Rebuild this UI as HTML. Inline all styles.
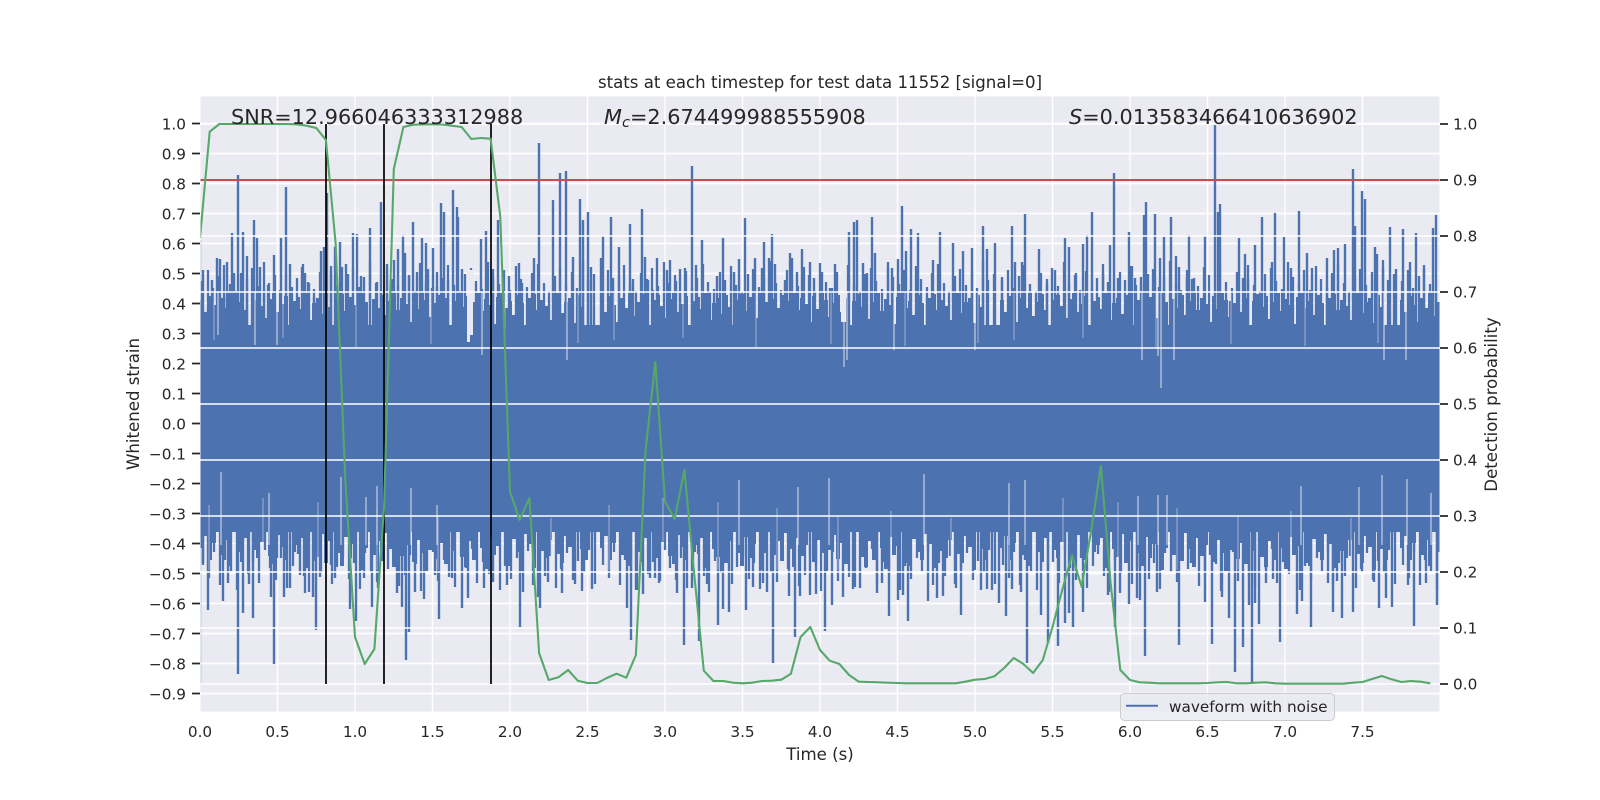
<!DOCTYPE html>
<html><head><meta charset="utf-8"><style>
html,body{margin:0;padding:0;background:#fff;width:1600px;height:800px;overflow:hidden}
svg{display:block}
text{font-family:"DejaVu Sans","Liberation Sans",sans-serif;fill:#262626}
.t{font-size:15.28px}
.l{font-size:16.6px}
.a{font-size:20.8px}
</style></head><body>
<svg width="1600" height="800" viewBox="0 0 1600 800" xmlns="http://www.w3.org/2000/svg">
<defs>
<clipPath id="ax"><rect x="200.5" y="96.5" width="1239" height="615"/></clipPath>
<path id="mt" d="M0 423V300h4V312h4V296h4V305h4V322h4V298h4V308h4V293h4V316h4V302h4V294h4V310h4V328h4V300h4V295h4V306h4V318h4V299h4V293h4V312h4V304h4V296h4V325h4V301h4V297h4V309h4V293h4V320h4V303h4V298h4V314h4V295h4V307h4V331h4V300h4V294h4V311h4V297h4V305h4V318h4V293h4V302h4V326h4V299h4V308h4V295h4V315h4V301h4V293h4V310h4V298h4V304h4V322h4V296h4V309h4V293h4V300h4V317h4V303h4V295h4V312h4V298h4V328h4V301h4V294h4V307h4V296h4V319h4V302h4V293h4V311h4V299h4V305h4V324h4V297h4V293h4V308h4V301h4V315h4V295h4V303h4V329h4V298h4V294h4V310h4V300h4V306h4V320h4V296h4V293h4V313h4V302h4V298h4V323h4V295h4V307h4V300V423Z"/>
<path id="mb" d="M0 423V548h4V536h4V560h4V543h4V528h4V555h4V540h4V566h4V532h4V552h4V562h4V538h4V525h4V550h4V558h4V542h4V530h4V556h4V564h4V535h4V547h4V560h4V527h4V552h4V545h4V538h4V568h4V529h4V549h4V557h4V534h4V563h4V541h4V522h4V553h4V566h4V537h4V558h4V544h4V531h4V570h4V548h4V526h4V555h4V541h4V561h4V533h4V549h4V567h4V538h4V556h4V545h4V529h4V562h4V540h4V553h4V571h4V550h4V535h4V559h4V543h4V564h4V532h4V551h4V524h4V557h4V567h4V541h4V560h4V530h4V548h4V569h4V537h4V555h4V546h4V527h4V563h4V566h4V539h4V552h4V560h4V534h4V544h4V568h4V528h4V551h4V558h4V540h4V523h4V554h4V563h4V536h4V547h4V570h4V530h4V549h4V560h4V538V423Z"/>
<path id="st" d="M2 281V340M8 270V340M13 288V340M19 276V340M24 265V340M30 284V340M36 291V340M41 273V340M47 279V340M52 268V340M58 286V340M64 262V340M69 283V340M75 275V340M80 290V340M86 271V340M92 287V340M97 278V340M103 264V340M108 282V340M114 289V340M120 272V340M125 280V340M131 266V340M136 285V340M142 292V340M148 274V340M153 269V340M159 287V340M164 277V340M170 261V340M176 283V340M181 290V340M187 270V340M192 279V340M198 286V340M204 267V340M209 275V340M215 291V340M220 263V340M226 282V340M232 288V340M237 272V340M243 278V340M248 265V340M254 285V340M260 291V340M265 274V340M271 268V340M276 281V340M282 289V340M288 262V340M293 277V340M299 284V340M304 270V340M310 290V340M316 266V340M321 279V340M327 287V340M332 273V340M338 264V340M344 283V340M349 291V340M355 276V340M360 269V340M366 285V340M372 272V340M377 288V340M383 260V340M388 280V340M394 274V340"/>
<path id="sb" d="M3 565V510M9 578V510M14 552V510M20 585V510M25 560V510M31 571V510M37 590V510M42 556V510M48 574V510M53 562V510M59 583V510M65 550V510M70 568V510M76 580V510M81 558V510M87 588V510M93 566V510M98 554V510M104 576V510M109 592V510M115 561V510M121 573V510M126 551V510M132 584V510M137 567V510M143 557V510M149 579V510M154 563V510M160 589V510M165 553V510M171 572V510M177 582V510M182 559V510M188 569V510M193 548V510M199 586V510M205 575V510M210 555V510M216 564V510M221 591V510M227 570V510M233 552V510M238 581V510M244 560V510M249 577V510M255 587V510M261 556V510M266 568V510M272 549V510M277 583V510M283 562V510M289 574V510M294 554V510M300 590V510M305 566V510M311 579V510M317 558V510M322 571V510M328 551V510M333 585V510M339 563V510M345 576V510M350 556V510M356 588V510M361 569V510M367 553V510M373 580V510M378 561V510M384 572V510M389 550V510M395 584V510"/>
<path id="ct" d="M14 293V340M83 293V338M156 293V348M231 293V344M305 293V346M378 293V343"/>
<path id="cb" d="M9 570V505M63 570V498M118 570V502M177 570V508M238 570V516M291 570V511M351 570V518"/>
</defs>
<rect width="1600" height="800" fill="#fff"/>
<rect x="200.5" y="96.5" width="1239" height="615" fill="#eaeaf2"/>
<!-- left axes grid -->
<path stroke="#fff" stroke-width="1.39" fill="none" clip-path="url(#ax)" d="M200 123.5H1440M200 153.5H1440M200 183.5H1440M200 213.5H1440M200 243.5H1440M200 273.5H1440M200 303.5H1440M200 333.5H1440M200 363.5H1440M200 393.5H1440M200 423.5H1440M200 453.5H1440M200 483.5H1440M200 513.5H1440M200 543.5H1440M200 573.5H1440M200 603.5H1440M200 633.5H1440M200 663.5H1440M200 693.5H1440M277.5 96V712M355 96V712M432.5 96V712M510 96V712M587.5 96V712M665 96V712M742.5 96V712M820 96V712M897.5 96V712M975 96V712M1052.5 96V712M1130 96V712M1207.5 96V712M1285 96V712M1362.5 96V712"/>
<g clip-path="url(#ax)">
<rect x="200" y="240" width="1.5" height="444" fill="#4c72b0" opacity=".25"/>
<rect x="200" y="325" width="1240" height="207" fill="#4c72b0"/>
<g fill="#4c72b0">
<use href="#mt" x="200"/><use href="#mt" x="600"/><use href="#mt" x="1000"/><use href="#mt" x="1400"/>
<use href="#mb" x="200"/><use href="#mb" x="600"/><use href="#mb" x="1000"/><use href="#mb" x="1400"/>
</g>
<g stroke="#4c72b0" stroke-width="2.3" fill="none">
<use href="#st" x="200"/><use href="#st" x="600"/><use href="#st" x="1000"/><use href="#st" x="1400"/>
<use href="#sb" x="200"/><use href="#sb" x="600"/><use href="#sb" x="1000"/><use href="#sb" x="1400"/>
</g>
<rect x="467" y="270" width="3" height="72" fill="#eaeaf2"/>
<rect x="470" y="270" width="3" height="65" fill="#eaeaf2"/>
<rect x="841" y="270" width="5" height="52" fill="#eaeaf2"/>
<!-- upper spikes -->
<path fill="none" stroke="#4c72b0" stroke-width="2.4" d="M203 270V340M208 310V340M212 280V340M217 258V340M220 259V340M224 297V340M227 262V340M232 233V340M234 273V340M238 175V340M243 232V340M247 256V340M254 220V340M257 238V340M260 267V340M264 290V340M268 285V340M274 255V340M281 238V340M286 187V340M290 264V340M302 267V340M305 273V340M309 283V340M314 297V340M321 251V340M324 247V340M327 193V340M331 271V340M335 247V340M340 242V340M342 267V340M346 264V340M353 233V340M357 234V340M361 276V340M370 228V340M377 282V340M381 202V340M387 264V340M394 260V340M398 249V340M403 235V340M405 253V340M409 276V340M413 222V340M417 272V340M422 238V340M426 243V340M428 269V340M433 248V340M437 287V340M441 203V340M444 212V340M448 280V340M453 190V340M457 207V340M458 217V340M462 269V340M481 239V340M486 231V340M493 269V340M498 220V340M503 277V340M509 276V340M519 263V340M522 283V340M534 258V340M539 143V340M553 200V340M560 173V340M566 171V340M573 257V340M580 199V340M583 220V340M588 212V340M591 267V340M601 258V340M603 236V340M611 217V340M613 278V340M619 247V340M630 224V340M633 279V340M642 209V340M645 257V340M648 280V340M653 290V340M657 258V340M667 270V340M670 260V340M676 281V340M680 269V340M685 268V340M692 166V340M696 265V340M702 240V340M710 292V340M717 276V340M723 238V340M734 272V340M739 259V340M745 218V340M755 258V340M762 268V340M764 242V340M769 258V340M772 234V340M775 264V340M785 280V340M790 253V340M792 258V340M797 272V340M802 249V340M810 262V340M814 278V340M822 272V340M830 288V340M835 264V340M849 232V340M854 222V340M857 220V340M863 263V340M867 273V340M872 217V340M875 253V340M888 267V340M892 268V340M898 259V340M902 206V340M906 251V340M911 229V340M918 233V340M927 299V340M933 260V340M940 232V340M953 243V340M963 251V340M972 248V340M983 226V340M987 249V340M995 243V340M1002 277V340M1012 226V340M1015 262V340M1022 262V340M1025 214V340M1039 249V340M1047 283V340M1055 270V340M1065 238V340M1069 247V340M1076 273V340M1083 244V340M1087 235V340M1092 212V340M1103 273V340M1110 245V340M1114 173V340M1118 278V340M1129 232V340M1132 266V340M1135 278V340M1141 277V340M1144 215V340M1146 202V340M1155 214V340M1160 258V340M1164 237V340M1171 217V340M1176 256V340M1179 267V340M1187 277V340M1189 235V340M1194 278V340M1205 236V340M1215 125V340M1218 212V340M1220 204V340M1230 301V340M1239 238V340M1245 254V340M1248 279V340M1255 245V340M1262 217V340M1272 262V340M1275 213V340M1284 237V340M1291 268V340M1299 211V340M1307 253V340M1312 268V340M1327 258V340M1334 250V340M1338 248V340M1345 244V340M1353 169V340M1355 226V340M1362 191V340M1365 199V340M1375 247V340M1377 254V340M1383 268V340M1390 227V340M1396 269V340M1403 229V340M1410 262V340M1416 233V340M1424 268V340M1433 228V340M1436 215V340"/>
<!-- lower spikes -->
<path fill="none" stroke="#4c72b0" stroke-width="2.4" d="M203 563V510M208 610V510M223 601V510M228 583V510M238 674V510M243 613V510M249 584V510M253 618V510M271 597V510M274 664V510M277 558V510M284 597V510M290 588V510M300 575V510M305 593V510M313 597V510M316 630V510M320 577V510M331 565V510M335 578V510M350 609V510M356 621V510M364 578V510M372 607V510M378 588V510M397 593V510M402 607V510M406 660V510M409 632V510M415 592V510M424 599V510M435 575V510M439 619V510M452 578V510M462 608V510M468 598V510M484 588V510M493 582V510M507 585V510M520 627V510M523 592V510M538 597V510M540 608V510M548 582V510M562 593V510M575 584V510M582 591V510M592 589V510M627 608V510M631 640V510M636 590V510M643 594V510M650 578V510M655 578V510M660 581V510M677 593V510M684 645V510M692 588V510M699 641V510M707 584V510M718 625V510M723 609V510M729 612V510M746 610V510M753 587V510M763 583V510M767 592V510M773 663V510M789 596V510M795 637V510M800 596V510M810 595V510M816 594V510M825 631V510M832 605V510M843 597V510M853 589V510M860 588V510M877 593V510M882 583V510M889 616V510M898 600V510M903 595V510M908 621V510M928 601V510M937 598V510M943 596V510M955 584V510M961 615V510M981 590V510M987 589V510M992 590V510M999 603V510M1006 616V510M1012 589V510M1021 592V510M1027 663V510M1041 615V510M1048 643V510M1058 646V510M1065 623V510M1069 613V510M1073 627V510M1083 612V510M1108 595V510M1115 627V510M1120 593V510M1129 604V510M1137 598V510M1140 600V510M1145 656V510M1157 592V510M1179 645V510M1191 563V510M1205 602V510M1212 644V510M1222 597V510M1229 618V510M1235 672V510M1243 647V510M1249 605V510M1252 682V510M1255 603V510M1259 624V510M1266 583V510M1273 579V510M1280 642V510M1297 614V510M1302 601V510M1311 627V510M1328 583V510M1333 612V510M1337 581V510M1342 618V510M1353 612V510M1362 572V510M1374 582V510M1379 608V510M1386 598V510M1392 607V510M1408 585V510M1414 626V510M1426 583V510M1437 605V510"/>
<!-- light cuts -->
<g stroke="#eaeaf2" stroke-width="1" fill="none" opacity=".55">
<use href="#ct" x="200"/><use href="#ct" x="600"/><use href="#ct" x="1000"/>
<use href="#cb" x="200"/><use href="#cb" x="600"/><use href="#cb" x="1000"/>
</g>
<path stroke="#eaeaf2" stroke-width="1.1" fill="none" opacity=".85" d="M218 292V335M255 292V345M277 292V345M482 292V355M567 292V360M844 292V367M847 292V360M894 292V350M975 292V350M1142 292V360M1158 292V356M1161 292V388M1174 292V360M1384 292V360M1406 292V360M221 545V472M269 545V493M341 545V477M366 545V497M377 545V486M411 545V488M437 545V505M924 545V474M739 545V480M798 545V487M1009 545V483M1025 545V480M829 545V478M1382 545V475M1431 545V493M1301 545V486M1359 545V487M1407 545V479M1138 545V496M1158 545V495M1167 545V495"/>
</g>
<!-- right axes grid -->
<path stroke="#fff" stroke-width="1.39" fill="none" clip-path="url(#ax)" d="M200 124H1440M200 180H1440M200 236H1440M200 292H1440M200 348H1440M200 404H1440M200 460H1440M200 516H1440M200 572H1440M200 628H1440M200 684H1440"/>
<!-- threshold and markers -->
<path stroke="#c44e52" stroke-width="1.9" fill="none" d="M200.5 180H1439.5"/>
<path stroke="#000" stroke-width="1.7" fill="none" d="M326 124V684M384 124V684M491 124V684"/>
<polyline fill="none" stroke="#55a868" stroke-width="2.08" stroke-linejoin="round" clip-path="url(#ax)" points="200,238 209.7,131.7 219.4,124 229.1,124 238.8,124 248.4,124 258.1,124 267.8,124 277.5,124 287.2,124 296.9,124.3 306.6,125.7 316.3,128 325.9,140 335.6,243 345.3,480 355,637 364.7,664 374.4,649 384.1,506 393.8,169 403.4,127 413.1,124.7 422.8,124.3 432.5,124.2 442.2,124.5 451.9,125.7 461.6,127 471.3,139 480.9,138 490.6,138.7 500.3,216.7 510,491.7 519.7,520 529.4,498 539.1,653 548.7,680 558.4,677.3 568.1,670 577.8,680.7 587.5,683 597.2,683 606.9,678 616.6,673.7 626.3,677.7 635.9,655 645.6,450 655.3,362 665,501.7 674.7,519 684.4,470 694.1,573 703.8,670.7 713.4,681 723.1,681 732.8,682.7 742.5,683.3 752.2,682.7 761.9,681 771.6,680.7 781.3,679.7 790.9,673.7 800.6,637 810.3,627 820,650 829.7,660.7 839.4,664 849.1,675 858.8,681.7 868.4,682 878.1,682.3 887.8,682.7 897.5,683 907.2,683.3 916.9,683.3 926.6,683.3 936.3,683.3 945.9,683.3 955.6,683.3 965.3,681.7 975,679.7 984.7,679 994.4,676.3 1004.1,668 1013.8,658 1023.4,664 1033.1,673 1042.8,660 1052.5,627 1062.2,590 1071.9,555 1081.6,586.7 1091.3,530 1100.9,466 1110.6,583 1120.3,670 1130,680 1139.7,682.3 1149.4,682.7 1159.1,683.3 1168.8,683.3 1178.4,683.3 1188.1,683.3 1197.8,683.3 1207.5,683 1217.2,682.3 1226.9,682 1236.6,683.3 1246.3,683.3 1255.9,682.7 1265.6,682.3 1275.3,683.3 1285,683.7 1294.7,683.7 1304.4,683.7 1314.1,683.7 1323.8,683.7 1333.4,683.7 1343.1,683.7 1352.8,682.7 1362.5,682 1372.2,679 1381.9,676 1391.6,679.3 1401.3,682 1410.9,681 1420.6,681.7 1430.3,683.3"/>
<!-- tick marks -->
<path stroke="#262626" stroke-width="1.7" fill="none" d="M192 123.5H200M192 153.5H200M192 183.5H200M192 213.5H200M192 243.5H200M192 273.5H200M192 303.5H200M192 333.5H200M192 363.5H200M192 393.5H200M192 423.5H200M192 453.5H200M192 483.5H200M192 513.5H200M192 543.5H200M192 573.5H200M192 603.5H200M192 633.5H200M192 663.5H200M192 693.5H200M1440 124H1448M1440 180H1448M1440 236H1448M1440 292H1448M1440 348H1448M1440 404H1448M1440 460H1448M1440 516H1448M1440 572H1448M1440 628H1448M1440 684H1448"/>
<!-- annotations -->
<text class="a" x="231" y="124">SNR=12.966046333312988</text>
<text class="a" x="604" y="124"><tspan font-style="italic">M</tspan><tspan font-style="italic" font-size="14.6" dy="3">c</tspan><tspan dy="-3">=2.674499988555908</tspan></text>
<text class="a" x="1069" y="124"><tspan font-style="italic">S</tspan>=0.013583466410636902</text>
<!-- legend -->
<rect x="1120.5" y="693.5" width="214" height="27" rx="4" fill="#eaeaf2" fill-opacity=".8" stroke="#cccccc" stroke-width="1"/>
<path stroke="#4c72b0" stroke-width="2" d="M1126 705.7H1158"/>
<text class="t" x="1169" y="712">waveform with noise</text>
<!-- left y labels -->
<g text-anchor="end">
<text class="t" x="186" y="129.5">1.0</text><text class="t" x="186" y="159.5">0.9</text><text class="t" x="186" y="189.5">0.8</text><text class="t" x="186" y="219.5">0.7</text><text class="t" x="186" y="249.5">0.6</text><text class="t" x="186" y="279.5">0.5</text><text class="t" x="186" y="309.5">0.4</text><text class="t" x="186" y="339.5">0.3</text><text class="t" x="186" y="369.5">0.2</text><text class="t" x="186" y="399.5">0.1</text><text class="t" x="186" y="429.5">0.0</text><text class="t" x="186" y="459.5">−0.1</text><text class="t" x="186" y="489.5">−0.2</text><text class="t" x="186" y="519.5">−0.3</text><text class="t" x="186" y="549.5">−0.4</text><text class="t" x="186" y="579.5">−0.5</text><text class="t" x="186" y="609.5">−0.6</text><text class="t" x="186" y="639.5">−0.7</text><text class="t" x="186" y="669.5">−0.8</text><text class="t" x="186" y="699.5">−0.9</text>
</g>
<!-- right y labels -->
<text class="t" x="1453" y="129.5">1.0</text><text class="t" x="1453" y="185.5">0.9</text><text class="t" x="1453" y="241.5">0.8</text><text class="t" x="1453" y="297.5">0.7</text><text class="t" x="1453" y="353.5">0.6</text><text class="t" x="1453" y="409.5">0.5</text><text class="t" x="1453" y="465.5">0.4</text><text class="t" x="1453" y="521.5">0.3</text><text class="t" x="1453" y="577.5">0.2</text><text class="t" x="1453" y="633.5">0.1</text><text class="t" x="1453" y="689.5">0.0</text>
<!-- x labels -->
<g text-anchor="middle">
<text class="t" x="200" y="737">0.0</text><text class="t" x="277.5" y="737">0.5</text><text class="t" x="355" y="737">1.0</text><text class="t" x="432.5" y="737">1.5</text><text class="t" x="510" y="737">2.0</text><text class="t" x="587.5" y="737">2.5</text><text class="t" x="665" y="737">3.0</text><text class="t" x="742.5" y="737">3.5</text><text class="t" x="820" y="737">4.0</text><text class="t" x="897.5" y="737">4.5</text><text class="t" x="975" y="737">5.0</text><text class="t" x="1052.5" y="737">5.5</text><text class="t" x="1130" y="737">6.0</text><text class="t" x="1207.5" y="737">6.5</text><text class="t" x="1285" y="737">7.0</text><text class="t" x="1362.5" y="737">7.5</text>
<text class="l" x="820" y="760">Time (s)</text>
<text class="l" x="820" y="88">stats at each timestep for test data 11552 [signal=0]</text>
<text class="l" transform="translate(139 404) rotate(-90)">Whitened strain</text>
<text class="l" transform="translate(1497 404.5) rotate(-90)">Detection probability</text>
</g>
</svg>
</body></html>
